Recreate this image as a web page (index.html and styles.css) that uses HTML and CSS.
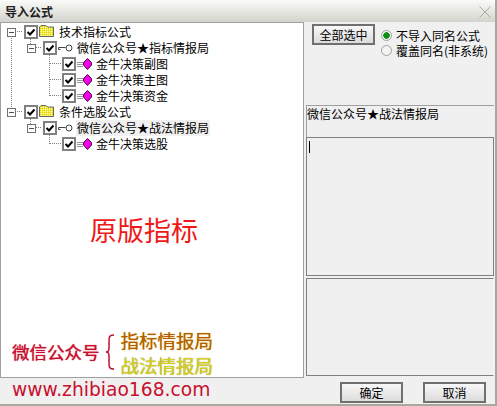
FILE: index.html
```html
<!DOCTYPE html>
<html lang="zh-CN">
<head>
    <meta charset="UTF-8">
    <title>导入公式</title>
    <link rel="stylesheet" href="styles.css">
</head>
<body>
    <svg class="defs" width="0" height="0">
      <defs>
        <pattern id="dither" width="2" height="2" patternUnits="userSpaceOnUse">
          <rect width="2" height="2" fill="#f8ee30"/>
          <rect width="1" height="1" fill="#fffbb0"/>
          <rect x="1" y="1" width="1" height="1" fill="#d8c820"/>
        </pattern>
      </defs>
      <symbol id="check" viewBox="0 0 14 14">
        <rect x="1" y="1" width="12" height="12" fill="#fff" stroke="#808080" stroke-width="2"/>
        <path d="M3.500 7l2.500 2.500 4.500-5" fill="none" stroke="#000" stroke-width="2"/>
      </symbol>
      <symbol id="folder" viewBox="0 0 15 12">
        <path d="M.5 11.500V2l1.500-1.500h5l1.500 1.500h6v9.500z" fill="url(#dither)" stroke="#666"/>
      </symbol>
      <symbol id="key" viewBox="0 0 15 8">
        <circle cx="11" cy="4" r="3" fill="#fff" stroke="#444"/>
        <path d="M.5 3.500h7M.5 3.500v2h2" fill="none" stroke="#444"/>
      </symbol>
      <symbol id="gem" viewBox="0 0 15 12">
        <path d="M0 4.500h6M0 6.500h7M0 8.500h6" stroke="#999"/>
        <path d="M10.500.5l4 4v2.500l-4 4.500-4-4.500v-2.500z" fill="#f400e8" stroke="#500050"/>
      </symbol>
    </svg>

    <div class="window">
      <div class="titlebar">
        <span class="title">导入公式</span>
        <svg class="close" width="12" height="12" viewBox="0 0 12 12"><path d="M.5.500l11 11M11.500.500l-11 11" stroke="#a8a8a4"/></svg>
      </div>

      <div class="main">
        <div class="tree">
          <div class="row level1">
            <span class="expander"></span>
            <svg class="box" width="14" height="14"><use href="#check"/></svg>
            <svg class="folder" width="15" height="12"><use href="#folder"/></svg>
            <span class="label">技术指标公式</span>
          </div>
          <div class="row level2">
            <span class="expander"></span>
            <svg class="box" width="14" height="14"><use href="#check"/></svg>
            <svg class="key" width="15" height="8"><use href="#key"/></svg>
            <span class="label">微信公众号★指标情报局</span>
          </div>
          <div class="row level3">
            <svg class="box" width="14" height="14"><use href="#check"/></svg>
            <svg class="gem" width="15" height="12"><use href="#gem"/></svg>
            <span class="label">金牛决策副图</span>
          </div>
          <div class="row level3">
            <svg class="box" width="14" height="14"><use href="#check"/></svg>
            <svg class="gem" width="15" height="12"><use href="#gem"/></svg>
            <span class="label">金牛决策主图</span>
          </div>
          <div class="row level3">
            <svg class="box" width="14" height="14"><use href="#check"/></svg>
            <svg class="gem" width="15" height="12"><use href="#gem"/></svg>
            <span class="label">金牛决策资金</span>
          </div>
          <div class="row level1">
            <span class="expander"></span>
            <svg class="box" width="14" height="14"><use href="#check"/></svg>
            <svg class="folder" width="15" height="12"><use href="#folder"/></svg>
            <span class="label">条件选股公式</span>
          </div>
          <div class="row level2">
            <span class="expander"></span>
            <svg class="box" width="14" height="14"><use href="#check"/></svg>
            <svg class="key" width="15" height="8"><use href="#key"/></svg>
            <span class="label selected">微信公众号★战法情报局</span>
          </div>
          <div class="row level3">
            <svg class="box" width="14" height="14"><use href="#check"/></svg>
            <svg class="gem" width="15" height="12"><use href="#gem"/></svg>
            <span class="label">金牛决策选股</span>
          </div>

          <!-- dotted tree lines -->
          <svg class="lines" width="100" height="130">
            <path d="M10.500 13v72M16 8.500h6M29.500 16v5M35 24.500h6M48.500 32v41M49 40.500h12M49 56.500h12M49 72.500h12M16 88.500h6M29.500 96v5M35 104.500h6M48.500 112v9M49 120.500h12" fill="none" stroke="#808080" stroke-dasharray="1 1"/>
          </svg>

          <div class="stamp">原版指标</div>
        </div>

        <div class="side">
          <div class="options">
            <button class="btn selectall">全部选中</button>
            <div class="radios">
              <div class="radio-row"><span class="radio on"></span>不导入同名公式</div>
              <div class="radio-row"><span class="radio"></span>覆盖同名(非系统)</div>
            </div>
          </div>
          <div class="infobox">微信公众号★战法情报局</div>
          <div class="memo"><span class="caret"></span></div>
          <div class="notes"></div>
        </div>
      </div>

      <div class="footer">
        <button class="btn">确定</button>
        <button class="btn">取消</button>
      </div>

      <div class="promo">
        <div class="promo-line">
          <span class="promo-name">微信公众号</span>
          <svg class="brace" width="12" height="36" viewBox="0 0 12 36"><path d="M10 1c-5 0-5 2-5 7v6c0 3-1 4-3 4 2 0 3 1 3 4v6c0 5 0 7 5 7" fill="none" stroke="#c0102a" stroke-width="1.500"/></svg>
          <div class="promo-tags">
            <span class="tag-orange">指标情报局</span>
            <span class="tag-yellow">战法情报局</span>
          </div>
        </div>
        <div class="promo-url">www.zhibiao168.com</div>
      </div>
    </div>
</body>
</html>
```

FILE: styles.css
```css
html, body {
  margin: 0;
  padding: 0;
}

body {
  font-family: "Noto Sans CJK SC", "DejaVu Sans", sans-serif;
  font-size: 12px;
  color: #000;
}

.defs {
  display: block;
  height: 0;
}

.window {
  position: relative;
  width: 497px;
  height: 406px;
  box-sizing: border-box;
  background: #f0f0f0;
  border-right: 2px solid #a8a8a0;
  border-bottom: 2px solid #a8a8a0;
  overflow: hidden;
}

.titlebar {
  height: 22px;
  box-sizing: border-box;
  padding: 0 3px 0 5px;
  display: flex;
  align-items: center;
  justify-content: space-between;
  background: linear-gradient(#fafaf8, #d4d4ce);
}

.title {
  font-weight: bold;
  font-size: 12px;
  color: #222;
}

.close {
  margin: 2px 1px 0 0;
}

.main {
  display: flex;
  height: 356px;
}

/* Tree on the left */
.tree {
  position: relative;
  width: 304px;
  box-sizing: border-box;
  padding-top: 1px;
  background: #fff;
  border: 1px solid #a0a0a0;
}

.row {
  display: flex;
  align-items: center;
  height: 16px;
}

.level1 {
  padding-left: 6px;
}

.level2 {
  padding-left: 26px;
}

.level3 {
  padding-left: 61px;
}

.expander {
  width: 7px;
  height: 7px;
  border: 1px solid #707070;
  background: linear-gradient(#505050, #505050) center / 5px 1px no-repeat #fff;
  margin-right: 8px;
  flex: none;
}

.level2 .expander {
  margin-right: 7px;
}

.box {
  flex: none;
}

.folder {
  margin: -3px 0 0 1px;
  flex: none;
}

.key {
  margin-left: 1px;
  flex: none;
}

.gem {
  margin-left: 1px;
  flex: none;
}

.label {
  white-space: nowrap;
  line-height: 16px;
  padding: 0 1px;
  margin-left: 3px;
}

.level1 .label {
  margin-left: 4px;
}

.selected {
  background: #f0f0f0;
}

.lines {
  position: absolute;
  left: 0;
  top: 0;
  pointer-events: none;
}

.stamp {
  position: absolute;
  left: 89px;
  top: 189px;
  font-size: 27px;
  line-height: 36px;
  color: #f01818;
  white-space: nowrap;
}

/* Right hand side */
.side {
  flex: 1;
  padding: 0 0 2px 2px;
  display: flex;
  flex-direction: column;
}

.options {
  height: 83px;
  box-sizing: border-box;
  padding: 2px 0 0 6px;
  display: flex;
}

.btn {
  width: 63px;
  height: 21px;
  padding: 0;
  background: linear-gradient(#f8f8f8, #dcdcdc);
  border: 2px solid #707070;
  font-family: inherit;
  font-size: 12px;
  color: #000;
}

.radios {
  margin: 4px 0 0 6px;
}

.radio-row {
  display: flex;
  align-items: center;
  height: 15px;
  line-height: 15px;
  white-space: nowrap;
}

.radio {
  width: 9px;
  height: 9px;
  margin-right: 4px;
  border: 1px solid #a0a0a0;
  border-radius: 50%;
  background: #f4f4f4;
}

.radio.on {
  background: radial-gradient(circle, #109010 0 3px, #f4f4f4 3.500px);
}

.infobox {
  height: 31px;
  margin-right: 1px;
  border: 1px solid #a0a0a0;
  border-width: 1px 0 0 1px;
  line-height: 16px;
  white-space: nowrap;
}

.memo {
  height: 135px;
  margin-right: 1px;
  border: 1px solid #808080;
  background: #f0f0f0;
  padding: 3px 0 0 2px;
}

.caret {
  display: block;
  width: 1px;
  height: 12px;
  background: #000;
}

.notes {
  height: 96px;
  margin: 2px 1px 0 0;
  border: 1px solid #808080;
  border-right-color: #f8f8f8;
}

.footer {
  display: flex;
  justify-content: flex-end;
  gap: 20px;
  padding: 4px 9px 0 0;
}

/* Red promo stamped over the bottom left */
.promo {
  position: absolute;
  left: 12px;
  top: 328px;
}

.promo-line {
  display: flex;
  align-items: center;
}

.promo-name {
  margin-top: -4px;
  font-size: 17.500px;
  color: #c8102e;
  text-shadow: 0 0 1px #c8102e;
  white-space: nowrap;
}

.brace {
  margin: -3px 5px 0 4px;
}

.promo-tags {
  display: flex;
  flex-direction: column;
  font-size: 18.500px;
  line-height: 25px;
  white-space: nowrap;
}

.tag-orange {
  color: #b06000;
  text-shadow: 0 0 1px #d89000;
}

.tag-yellow {
  color: #d8d020;
  text-shadow: 0 0 1px #808010;
}

.promo-url {
  margin-top: 1px;
  font-family: "DejaVu Sans", sans-serif;
  font-size: 18.700px;
  line-height: 22px;
  color: #c8102e;
  white-space: nowrap;
}
```
